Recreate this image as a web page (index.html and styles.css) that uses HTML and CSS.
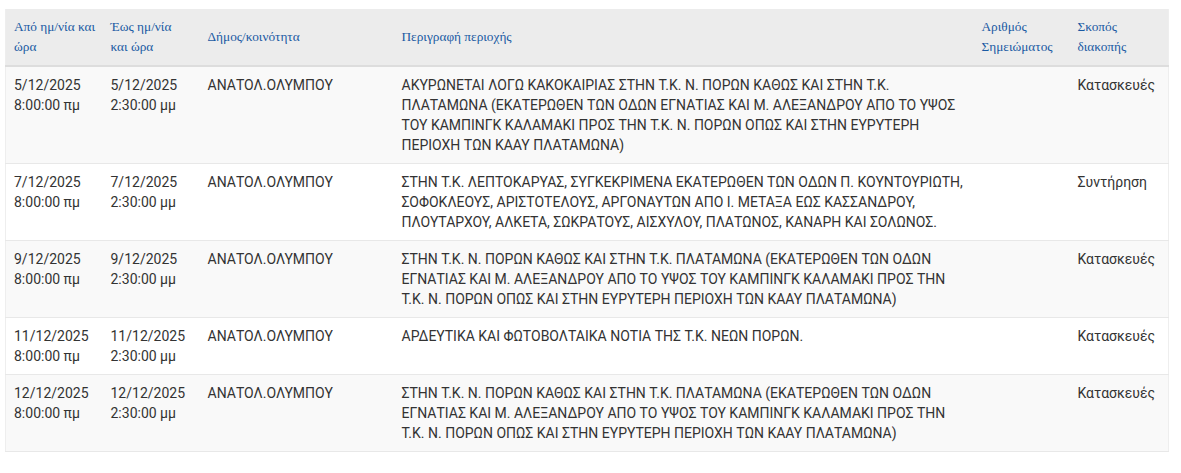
FILE: index.html
```html
<!DOCTYPE html>
<html lang="el">
<head>
<meta charset="utf-8">
<link rel="stylesheet" href="styles.css">
</head>
<body>
<div class="wrap">
<table class="grid">
<colgroup>
<col class="c1"><col class="c2"><col class="c3"><col class="c4"><col class="c5"><col class="c6">
</colgroup>
<thead>
<tr>
<th>Από ημ/νία&nbsp;και ώρα</th>
<th>Έως ημ/νία και&nbsp;ώρα</th>
<th>Δήμος/κοινότητα</th>
<th>Περιγραφή περιοχής</th>
<th>Αριθμός Σημειώματος</th>
<th>Σκοπός διακοπής</th>
</tr>
</thead>
<tbody>
<tr>
<td>5/12/2025 8:00:00 πμ</td>
<td>5/12/2025 2:30:00 μμ</td>
<td>ΑΝΑΤΟΛ.ΟΛΥΜΠΟΥ</td>
<td>ΑΚΥΡΩΝΕΤΑΙ ΛΟΓΩ ΚΑΚΟΚΑΙΡΙΑΣ ΣΤΗΝ Τ.Κ. Ν. ΠΟΡΩΝ ΚΑΘΩΣ ΚΑΙ ΣΤΗΝ Τ.Κ. ΠΛΑΤΑΜΩΝΑ (ΕΚΑΤΕΡΩΘΕΝ ΤΩΝ ΟΔΩΝ ΕΓΝΑΤΙΑΣ ΚΑΙ Μ. ΑΛΕΞΑΝΔΡΟΥ ΑΠΟ ΤΟ ΥΨΟΣ ΤΟΥ ΚΑΜΠΙΝΓΚ ΚΑΛΑΜΑΚΙ ΠΡΟΣ ΤΗΝ Τ.Κ. Ν. ΠΟΡΩΝ ΟΠΩΣ ΚΑΙ ΣΤΗΝ ΕΥΡΥΤΕΡΗ ΠΕΡΙΟΧΗ ΤΩΝ ΚΑΑΥ ΠΛΑΤΑΜΩΝΑ)</td>
<td></td>
<td>Κατασκευές</td>
</tr>
<tr>
<td>7/12/2025 8:00:00 πμ</td>
<td>7/12/2025 2:30:00 μμ</td>
<td>ΑΝΑΤΟΛ.ΟΛΥΜΠΟΥ</td>
<td>ΣΤΗΝ Τ.Κ. ΛΕΠΤΟΚΑΡΥΑΣ, ΣΥΓΚΕΚΡΙΜΕΝΑ ΕΚΑΤΕΡΩΘΕΝ ΤΩΝ ΟΔΩΝ Π. ΚΟΥΝΤΟΥΡΙΩΤΗ, ΣΟΦΟΚΛΕΟΥΣ, ΑΡΙΣΤΟΤΕΛΟΥΣ, ΑΡΓΟΝΑΥΤΩΝ ΑΠΟ Ι. ΜΕΤΑΞΑ ΕΩΣ ΚΑΣΣΑΝΔΡΟΥ, ΠΛΟΥΤΑΡΧΟΥ, ΑΛΚΕΤΑ, ΣΩΚΡΑΤΟΥΣ, ΑΙΣΧΥΛΟΥ, ΠΛΑΤΩΝΟΣ, ΚΑΝΑΡΗ ΚΑΙ ΣΟΛΩΝΟΣ.</td>
<td></td>
<td>Συντήρηση</td>
</tr>
<tr>
<td>9/12/2025 8:00:00 πμ</td>
<td>9/12/2025 2:30:00 μμ</td>
<td>ΑΝΑΤΟΛ.ΟΛΥΜΠΟΥ</td>
<td>ΣΤΗΝ Τ.Κ. Ν. ΠΟΡΩΝ ΚΑΘΩΣ ΚΑΙ ΣΤΗΝ Τ.Κ. ΠΛΑΤΑΜΩΝΑ (ΕΚΑΤΕΡΩΘΕΝ ΤΩΝ ΟΔΩΝ ΕΓΝΑΤΙΑΣ ΚΑΙ Μ. ΑΛΕΞΑΝΔΡΟΥ ΑΠΟ ΤΟ ΥΨΟΣ ΤΟΥ ΚΑΜΠΙΝΓΚ ΚΑΛΑΜΑΚΙ ΠΡΟΣ ΤΗΝ Τ.Κ. Ν. ΠΟΡΩΝ ΟΠΩΣ ΚΑΙ ΣΤΗΝ ΕΥΡΥΤΕΡΗ ΠΕΡΙΟΧΗ ΤΩΝ ΚΑΑΥ ΠΛΑΤΑΜΩΝΑ)</td>
<td></td>
<td>Κατασκευές</td>
</tr>
<tr>
<td>11/12/2025 8:00:00 πμ</td>
<td>11/12/2025 2:30:00 μμ</td>
<td>ΑΝΑΤΟΛ.ΟΛΥΜΠΟΥ</td>
<td>ΑΡΔΕΥΤΙΚΑ ΚΑΙ ΦΩΤΟΒΟΛΤΑΙΚΑ ΝΟΤΙΑ ΤΗΣ Τ.Κ. ΝΕΩΝ ΠΟΡΩΝ.</td>
<td></td>
<td>Κατασκευές</td>
</tr>
<tr>
<td>12/12/2025 8:00:00 πμ</td>
<td>12/12/2025 2:30:00 μμ</td>
<td>ΑΝΑΤΟΛ.ΟΛΥΜΠΟΥ</td>
<td>ΣΤΗΝ Τ.Κ. Ν. ΠΟΡΩΝ ΚΑΘΩΣ ΚΑΙ ΣΤΗΝ Τ.Κ. ΠΛΑΤΑΜΩΝΑ (ΕΚΑΤΕΡΩΘΕΝ ΤΩΝ ΟΔΩΝ ΕΓΝΑΤΙΑΣ ΚΑΙ Μ. ΑΛΕΞΑΝΔΡΟΥ ΑΠΟ ΤΟ ΥΨΟΣ ΤΟΥ ΚΑΜΠΙΝΓΚ ΚΑΛΑΜΑΚΙ ΠΡΟΣ ΤΗΝ Τ.Κ. Ν. ΠΟΡΩΝ ΟΠΩΣ ΚΑΙ ΣΤΗΝ ΕΥΡΥΤΕΡΗ ΠΕΡΙΟΧΗ ΤΩΝ ΚΑΑΥ ΠΛΑΤΑΜΩΝΑ)</td>
<td></td>
<td>Κατασκευές</td>
</tr>
</tbody>
</table>
</div>
</body>
</html>
```
FILE: styles.css
```css
html, body {
  margin: 0;
  padding: 0;
  background: #fff;
}
.wrap {
  padding: 9px 0 0 5px;
}
.grid {
  border-collapse: collapse;
  table-layout: fixed;
  width: 1163px;
  font-family: Roboto, "Noto Sans", sans-serif;
  font-size: 14px;
  line-height: 20px;
  color: #333;
  border-left: 1px solid #eeeeee;
  border-right: 1px solid #eeeeee;
}
.c1 { width: 97px; }
.c2 { width: 97px; }
.c3 { width: 194px; }
.c4 { width: 580px; }
.c5 { width: 96px; }
.c6 { width: 99px; }
.grid th {
  background: #ececec;
  font-family: "Liberation Serif", "Times New Roman", serif;
  font-weight: normal;
  font-size: 13.3px;
  color: #1a5aa3;
  text-align: left;
  vertical-align: middle;
  padding: 8px 6px 8px 8px;
  border-bottom: 2px solid #dddddd;
}
.grid td {
  padding: 8px;
  vertical-align: top;
  border-top: 1px solid #e8e8e8;
}
.grid tbody tr:nth-child(odd) td {
  background: #f9f9f9;
}
.grid tbody tr:last-child td {
  border-bottom: 1px solid #e8e8e8;
}
```
